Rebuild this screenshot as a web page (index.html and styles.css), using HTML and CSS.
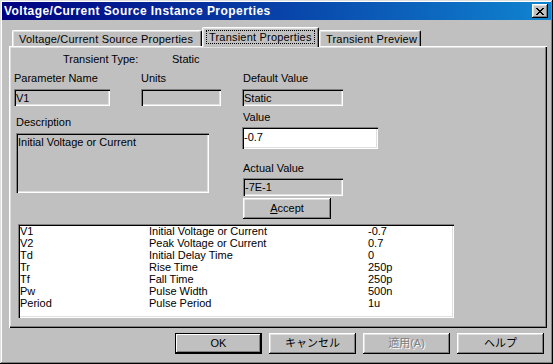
FILE: index.html
```html
<!DOCTYPE html>
<html lang="ja">
<head>
  <meta charset="UTF-8">
  <title>Voltage/Current Source Instance Properties</title>
  <link rel="stylesheet" href="styles.css">
</head>
<body>

<div class="window">
  <div class="titlebar">
    <span class="title">Voltage/Current Source Instance Properties</span>
    <div class="close-btn">
      <svg width="8" height="7" viewBox="0 0 8 7">
        <path d="M0 0h2v1h1v1h2v-1h1v-1h2v1h-1v1h-1v1h-1v1h1v1h1v1h1v1h-2v-1h-1v-1h-2v1h-1v1h-2v-1h1v-1h1v-1h1v-1h-1v-1h-1v-1h-1z" fill="#000"/>
      </svg>
    </div>
  </div>

  <!-- タブ -->
  <div class="tabs">
    <div class="tab tab-source">Voltage/Current Source Properties</div>
    <div class="tab tab-active"><span class="focus">Transient Properties</span></div>
    <div class="tab tab-preview">Transient Preview</div>
  </div>

  <div class="panel">
    <div class="top">
      <div class="col-left">
        <div class="ttype"><span class="ttype-label">Transient Type:</span>Static</div>
        <div class="field-row">
          <div class="field-group">
            <div class="label">Parameter Name</div>
            <div class="field field-name">V1</div>
          </div>
          <div class="field-group">
            <div class="label">Units</div>
            <div class="field field-units"></div>
          </div>
        </div>
        <div class="label label-desc">Description</div>
        <div class="field field-desc">Initial Voltage or Current</div>
      </div>

      <div class="col-right">
        <div class="label">Default Value</div>
        <div class="field field-default">Static</div>
        <div class="label label-value">Value</div>
        <div class="field field-value">-0.7</div>
        <div class="label label-actual">Actual Value</div>
        <div class="field field-actual">-7E-1</div>
        <div class="btn btn-accept"><u>A</u>ccept</div>
      </div>
    </div>

    <div class="list">
      <div class="row"><span class="c1">V1</span><span class="c2">Initial Voltage or Current</span><span>-0.7</span></div>
      <div class="row"><span class="c1">V2</span><span class="c2">Peak Voltage or Current</span><span>0.7</span></div>
      <div class="row"><span class="c1">Td</span><span class="c2">Initial Delay Time</span><span>0</span></div>
      <div class="row"><span class="c1">Tr</span><span class="c2">Rise Time</span><span>250p</span></div>
      <div class="row"><span class="c1">Tf</span><span class="c2">Fall Time</span><span>250p</span></div>
      <div class="row"><span class="c1">Pw</span><span class="c2">Pulse Width</span><span>500n</span></div>
      <div class="row"><span class="c1">Period</span><span class="c2">Pulse Period</span><span>1u</span></div>
    </div>
  </div>

  <div class="footer">
    <div class="btn btn-default">OK</div>
    <div class="btn">キャンセル</div>
    <div class="btn btn-disabled">適用(A)</div>
    <div class="btn">ヘルプ</div>
  </div>
</div>

</body>
</html>
```

FILE: styles.css
```css
body {
  margin: 0;
  padding: 0;
  background: #c0c0c0;
  font-family: 'Liberation Sans', Arial, 'Noto Sans CJK JP', sans-serif;
  font-size: 11px;
  color: #000;
  overflow: hidden;
}

.window {
  box-sizing: border-box;
  width: 553px;
  height: 364px;
  padding: 2px;
  background: #c0c0c0;
  box-shadow: inset -1px -1px #000, inset 1px 1px #dfdfdf, inset -2px -2px #808080, inset 2px 2px #fff;
}

.titlebar {
  height: 18px;
  display: flex;
  align-items: center;
  justify-content: space-between;
  padding: 0 3px 0 2px;
  background: linear-gradient(to right, #000080, #1084d0);
  color: #fff;
}

.title {
  font-weight: 700;
  font-size: 12px;
  letter-spacing: 0.45px;
}

.close-btn {
  box-sizing: border-box;
  width: 16px;
  height: 14px;
  background: #c0c0c0;
  display: flex;
  align-items: center;
  justify-content: center;
  box-shadow: inset -1px -1px #000, inset 1px 1px #fff, inset -2px -2px #808080, inset 2px 2px #dfdfdf;
}

/* タブ */
.tabs {
  display: flex;
  align-items: flex-end;
  height: 19px;
  margin: 7px 0 0 10px;
  position: relative;
  z-index: 2;
}

.tab {
  box-sizing: border-box;
  height: 16px;
  line-height: 14px;
  padding: 1px 0 0 6px;
  border-top: 1px solid #fff;
  border-left: 1px solid #fff;
  border-right: 1px solid #000;
  border-radius: 2px 2px 0 0;
  box-shadow: inset -1px 0 #808080, inset 1px 1px #dfdfdf;
  background: #c0c0c0;
  letter-spacing: 0.2px;
}

.tab-source { width: 190px; }
.tab-preview { width: 102px; }

.tab-active {
  width: 117px;
  height: 20px;
  margin-bottom: -1px;
  padding: 2px 0 0 3px;
}

.focus {
  display: inline-block;
  border: 1px dotted #000;
  padding: 0 2px;
  line-height: 12px;
}

.panel {
  box-sizing: border-box;
  width: 538px;
  height: 282px;
  margin-left: 7px;
  padding: 7px 0 0 5px;
  box-shadow: inset 1px 1px #fff, inset -1px -1px #000, inset -2px -2px #808080, inset 2px 2px #dfdfdf;
}

.top {
  display: flex;
}

.col-left {
  width: 229px;
}

.ttype {
  height: 12px;
  line-height: 12px;
  padding-left: 49px;
}

.ttype-label {
  display: inline-block;
  width: 109px;
}

.field-row {
  display: flex;
  gap: 31px;
  margin-top: 7px;
}

.label {
  height: 12px;
  line-height: 12px;
}

.field {
  box-sizing: border-box;
  height: 17px;
  line-height: 14px;
  padding: 2px 0 0 2px;
  margin-top: 5px;
  background: #c0c0c0;
  box-shadow: inset 1px 1px #808080, inset 2px 2px #000, inset -1px -1px #fff, inset -2px -2px #dfdfdf;
  white-space: nowrap;
}

.field-name { width: 96px; }
.field-units { width: 80px; }

.label-desc {
  margin: 10px 0 0 2px;
}

.field-desc {
  width: 193px;
  height: 60px;
  margin-left: 2px;
}

.col-right {
  padding-top: 19px;
}

.field-default {
  width: 101px;
  margin-left: -1px;
}

.label-value { margin-top: 5px; }

.field-value {
  width: 136px;
  height: 22px;
  line-height: 17px;
  margin-left: -1px;
  margin-top: 4px;
  background: #fff;
}

.label-actual { margin-top: 13px; }

.field-actual {
  width: 100px;
  height: 18px;
  margin-top: 4px;
}

.btn {
  box-sizing: border-box;
  width: 87px;
  height: 21px;
  line-height: 21px;
  text-align: center;
  background: #c0c0c0;
  box-shadow: inset -1px -1px #000, inset 1px 1px #fff, inset -2px -2px #808080, inset 2px 2px #dfdfdf;
  font-family: 'Liberation Sans', 'Noto Sans CJK JP', sans-serif;
}

.btn-accept {
  width: 88px;
  margin-top: 2px;
  font-size: 11px;
}

.list {
  box-sizing: border-box;
  width: 436px;
  height: 94px;
  margin: 5px 0 0 4px;
  padding: 1px 0 0 2px;
  background: #fff;
  box-shadow: inset 1px 1px #808080, inset 2px 2px #000, inset -1px -1px #fff, inset -2px -2px #dfdfdf;
}

.row {
  display: flex;
  height: 12px;
  line-height: 12px;
}

.c1 { width: 129px; }
.c2 { width: 219px; }

.footer {
  display: flex;
  justify-content: flex-end;
  gap: 7px;
  margin-top: 5px;
  padding-right: 7px;
}

.footer .btn {
  font-size: 11px;
}

.btn-default {
  box-shadow: inset 0 0 0 1px #000, inset -2px -2px #000, inset 2px 2px #fff, inset -3px -3px #808080;
}

.btn-disabled {
  color: #808080;
  text-shadow: 1px 1px #fff;
}
```
